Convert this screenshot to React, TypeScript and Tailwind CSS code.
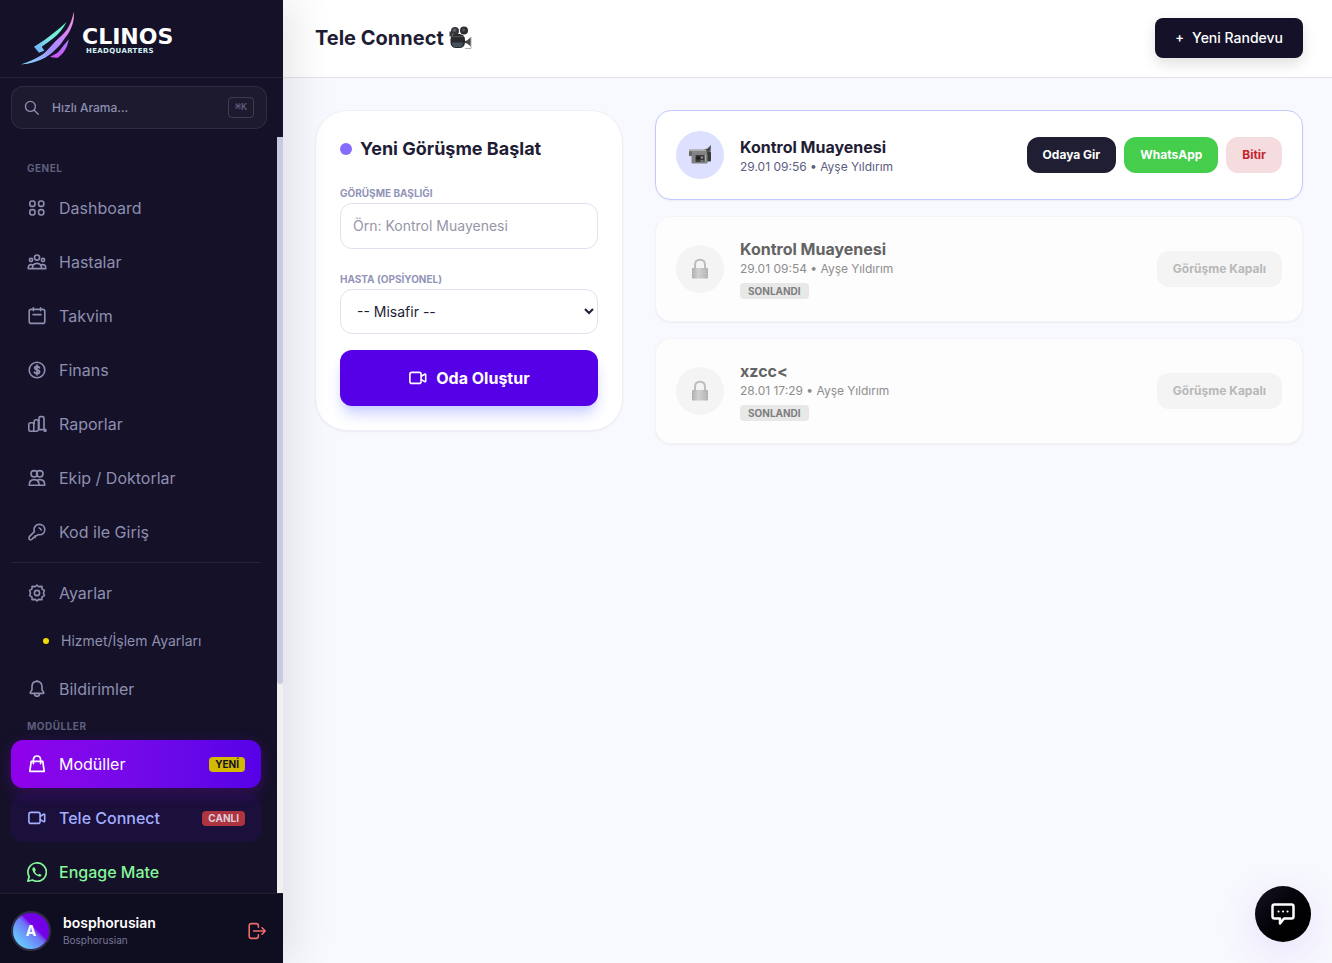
import React from "react";

const navItems = [
	{ label: "Dashboard", icon: <DashboardIcon /> },
	{ label: "Hastalar", icon: <PatientsIcon /> },
	{ label: "Takvim", icon: <CalendarIcon /> },
	{ label: "Finans", icon: <FinanceIcon /> },
	{ label: "Raporlar", icon: <ReportsIcon /> },
	{ label: "Ekip / Doktorlar", icon: <TeamIcon /> },
	{ label: "Kod ile Giriş", icon: <KeyIcon /> },
];

const calls = [
	{ title: "Kontrol Muayenesi", info: "29.01 09:56 • Ayşe Yıldırım", active: true },
	{ title: "Kontrol Muayenesi", info: "29.01 09:54 • Ayşe Yıldırım", active: false },
	{ title: "xzcc<", info: "28.01 17:29 • Ayşe Yıldırım", active: false },
];

function Icon({ children, className = "size-5" }: { children: React.ReactNode; className?: string }) {
	return (
		<svg
			viewBox="0 0 20 20"
			className={`${className} shrink-0`}
			fill="none"
			stroke="currentColor"
			strokeWidth="1.6"
			strokeLinecap="round"
			strokeLinejoin="round"
			aria-hidden="true"
		>
			{children}
		</svg>
	);
}

function DashboardIcon() {
	return (
		<Icon>
			<rect x="2.8" y="3" width="5.2" height="5.4" rx="2.2" />
			<rect x="11.6" y="3" width="5.2" height="5.4" rx="2.2" />
			<rect x="2.8" y="11.6" width="5.2" height="5.4" rx="2.2" />
			<rect x="11.6" y="11.6" width="5.2" height="5.4" rx="2.2" />
		</Icon>
	);
}

function PatientsIcon() {
	return (
		<Icon>
			<circle cx="10" cy="5.6" r="2.6" />
			<circle cx="4" cy="8" r="1.600" />
			<circle cx="16" cy="8" r="1.600" />
			<path d="M5.400 16.600c0-3.400 1.600-5.200 4.600-5.200s4.600 1.800 4.600 5.200M1.200 16.600h17.600c0-2.800-.9-4-3.200-4-.7 0-1.100.1-1.600.4M1.200 16.600c0-2.800.9-4 3.200-4 .7 0 1.100.1 1.600.4" />
		</Icon>
	);
}

function CalendarIcon() {
	return (
		<Icon>
			<rect x="2.200" y="3.400" width="15.600" height="14" rx="2" />
			<path d="M6.400 1.800v2.800M13.600 1.800v2.800M6 8.600h8" />
		</Icon>
	);
}

function FinanceIcon() {
	return (
		<Icon>
			<circle cx="10" cy="10" r="7.800" />
			<path d="M12.400 7.800c-.3-.8-1.100-1.300-2.400-1.300-1.400 0-2.300.6-2.300 1.600 0 2.600 4.800 1.100 4.800 3.800 0 1-1 1.600-2.500 1.600-1.400 0-2.300-.5-2.600-1.400M10 5.200v9.600" strokeWidth="1.800" />
		</Icon>
	);
}

function ReportsIcon() {
	return (
		<Icon>
			<rect x="1.800" y="8.800" width="5" height="8.400" rx="1.700" />
			<path d="M6.600 17.200h3.200c1 0 1.600-.6 1.600-1.600V7.400c0-1-.6-1.600-1.600-1.600H8.800c-1 0-1.600.6-1.600 1.600v2" />
			<path d="M12.400 15.600h6.400v1.600h-1.400M12 14V4.200c0-1 .6-1.600 1.600-1.600h1.800c1 0 1.600.6 1.600 1.600v11.400" />
		</Icon>
	);
}

function TeamIcon() {
	return (
		<Icon>
			<circle cx="7.200" cy="5.800" r="3.200" />
			<circle cx="12.800" cy="5.800" r="3.200" />
			<path d="M2.200 17.200c0-3.800 1.600-5.600 5-5.600s5 1.800 5 5.600zM11.400 11.800c.4-.1.9-.2 1.600-.2 3.200 0 4.800 1.800 4.800 5.600h-5.600" />
		</Icon>
	);
}

function KeyIcon() {
	return (
		<Icon>
			<path d="M12.200 2.400c3.400 0 5.600 2.200 5.600 5.200s-2.200 5.200-5.200 5.200c-1 0-1.600-.2-1.600-.2l-1.400 1.200H8.200v1.600H6.600L5 17.200c-.3.400-.8.500-1.200.5H3c-.6 0-.9-.4-.9-.9v-1.300c0-.4.200-.8.500-1.100L7.400 9.600S7 8.700 7 7.600c0-3 2.200-5.200 5.200-5.200z" />
			<path d="M12.200 5.900c1 .3 1.700 1 2 2" />
		</Icon>
	);
}

function GearIcon() {
	return (
		<Icon>
			<path d="M8.300 3.600 10 2.200l1.700 1.400 3.200-.2.200 2.700 2.300 1.300-.9 2.600.9 2.600-2.300 1.300-.2 2.700-3.200-.2L10 17.800l-1.700-1.400-3.200.2-.2-2.700-2.300-1.300.9-2.600-.9-2.600 2.300-1.300.2-2.700z" />
			<circle cx="10" cy="10" r="2.600" />
		</Icon>
	);
}

function BellIcon() {
	return (
		<Icon>
			<path d="M10 2.400c-3.200 0-5 2.200-5 5.200v3.200l-1.700 2.600c-.3.500 0 1 .6 1h12.200c.6 0 .9-.5.6-1L15 10.800V7.600c0-3-1.800-5.200-5-5.200zM7.400 14.600c.2 1.700 1.100 2.700 2.600 2.700s2.400-1 2.600-2.700M10 1.500v.9" />
		</Icon>
	);
}

function BagIcon() {
	return (
		<Icon>
			<path d="M4.200 7.400h11.600l1.400 9.900H2.800zM6.400 9.600V6c0-2.400 1.300-4 3.600-4s3.600 1.600 3.600 4v3.600" strokeWidth="1.700" />
		</Icon>
	);
}

function VideoIcon({ className }: { className?: string }) {
	return (
		<Icon className={className}>
			<rect x="1.900" y="4.400" width="11.200" height="11" rx="2" />
			<path d="m13.300 8.200 3.400-2c.5-.3 1 0 1 .6v6.200c0 .6-.5.900-1 .6l-3.400-2" />
		</Icon>
	);
}

function WhatsAppIcon() {
	return (
		<Icon>
			<path d="M.8 19.200 2.200 14.700A9.200 9.200 0 1 1 5.500 18z" strokeWidth="1.700" />
			<path d="M6.300 5.400c-.9.400-1.200 1.500-.8 2.800 1 3.200 3.300 5.400 6.400 6.200 1.300.3 2.400-.3 2.600-1.500l-2.100-1.200-1.200 1c-1.600-.6-2.700-1.800-3.300-3.300l.9-1.100-.9-2.400c-.3-.5-.9-.7-1.600-.5z" fill="currentColor" stroke="none" />
		</Icon>
	);
}

function LogoutIcon() {
	return (
		<Icon>
			<path d="M11.400 6.200V4.800c0-1.400-.8-2.200-2.200-2.200H4.400C3 2.600 2.200 3.400 2.200 4.800v10.400c0 1.400.8 2.200 2.200 2.200h4.800c1.400 0 2.200-.8 2.200-2.200v-1.400M6.600 10h11.200M15 6.800l3.200 3.200-3.200 3.200" />
		</Icon>
	);
}

function LogoMark() {
	return (
		<svg viewBox="0 0 56 56" className="size-14 shrink-0" aria-hidden="true">
			<defs>
				<linearGradient id="blade" x1="1" y1="0" x2="0" y2="1">
					<stop offset="0" stopColor="#ff9bd2" />
					<stop offset=".3" stopColor="#d583fb" />
					<stop offset=".55" stopColor="#a58bff" />
					<stop offset="1" stopColor="#7fe0ff" />
				</linearGradient>
				<linearGradient id="wing" x1="1" y1="0" x2="0" y2="1">
					<stop offset="0" stopColor="#5ff7c0" />
					<stop offset=".5" stopColor="#7cebe0" />
					<stop offset="1" stopColor="#6fa8ff" />
				</linearGradient>
				<linearGradient id="fin" x1="1" y1="0" x2="0" y2="1">
					<stop offset="0" stopColor="#a97bff" />
					<stop offset="1" stopColor="#d54ef5" />
				</linearGradient>
			</defs>
			<path d="M53.700.7c.5 5 0 9-1.400 13.300C50.500 19 48.300 23 45 27c-3 4.500-6 8.500-10 12-3 3-6.500 5.500-10 7.700C18 50.500 10 52.700.7 53.400 8.500 51 15.500 48 21.700 44c5-3.600 9-8.500 13.300-13.300 4-4 8.500-7.500 11.700-11.700C50 14 52.700 7 53.700.7z" fill="url(#blade)" />
			<path d="M46.700 10.700C43 18 38.500 23 33.300 27.300c-3.600 3-7.600 5.700-11.600 8.400l2.600 4-5.300 2-5-6c7-4 13.500-8.500 19.300-13.400 4.700-3.800 9.200-7.300 13.400-11.600z" fill="url(#wing)" />
			<path d="M48.700 28.300c-.4 3.700-1.700 7.400-3.700 10.700-1.800 3-4.200 5.700-7.300 7.700-2.700.3-5.200-.2-7.700-1 2.500-1 4.700-2 6.700-3.400 2.600-2.200 4.600-4.800 6.600-7.600 2-2 3.800-4.200 5.400-6.400z" fill="url(#fin)" />
		</svg>
	);
}

function FilmCamera() {
	return (
		<svg viewBox="0 0 24 24" className="size-6" role="img" aria-label="Kamera">
			<circle cx="7" cy="5" r="4" fill="#38383c" />
			<circle cx="16" cy="4.500" r="4" fill="#2c2c30" />
			<circle cx="6.500" cy="4.300" r="1.800" fill="#606066" />
			<circle cx="15.500" cy="4" r="1.800" fill="#505056" />
			<path d="M1.500 5.500h3v5h-3z" fill="#3a3a3f" />
			<rect x="2.500" y="8" width="14.500" height="14" rx="5.500" fill="#29292d" />
			<path d="M4 16.500h10.500v2c0 1.500-1 2.500-2.500 2.500H7c-2 0-3-2-3-4.500z" fill="#45525e" />
			<path d="M3.500 10.500h12.500" stroke="#505056" strokeWidth="1.200" />
			<path d="m17 15 2-.5 4-3.500v9.500L19 17.500l-2-.5z" fill="#46464b" />
			<path d="M23 11v11.500h-6" stroke="#b2b2b6" strokeWidth="1" fill="none" />
		</svg>
	);
}

function Camcorder() {
	return (
		<svg viewBox="0 0 24 24" className="size-6" role="img" aria-label="Görüşme açık">
			<path d="m15.500 6.500 4-1L23 2l-.5 6.500-5 .5z" fill="#4a4a4a" />
			<rect x="18.500" y="8.500" width="4.500" height="10" rx="1" fill="#3a3a3a" />
			<rect x="1" y="6.500" width="17.500" height="5" rx="1" fill="#858585" />
			<path d="M1.500 7.200H18" stroke="#c0c0c0" strokeWidth="1" />
			<rect x="1" y="8.500" width="3" height="4.500" fill="#666" />
			<rect x="3.500" y="10.500" width="16" height="10" rx="1.200" fill="#808080" />
			<rect x="7.500" y="12" width="9" height="7" rx="1" fill="#3d3d3d" />
			<circle cx="10" cy="15" r="2" fill="#222" />
			<circle cx="14" cy="14.500" r="1" fill="#aaa" />
			<path d="M12.500 18h3M17.500 12v6.500" stroke="#aaa" strokeWidth="1" />
		</svg>
	);
}

function Padlock() {
	return (
		<svg viewBox="0 0 24 24" className="size-6" role="img" aria-label="Görüşme kapalı">
			<defs>
				<linearGradient id="lock">
					<stop offset="0" stopColor="#a8a8a8" />
					<stop offset=".4" stopColor="#d2d2d2" />
					<stop offset="1" stopColor="#adadad" />
				</linearGradient>
			</defs>
			<path d="M7 12V8c0-3.300 2-5.200 5-5.200S17 4.700 17 8v4" fill="none" stroke="#bdbdbd" strokeWidth="2" />
			<rect x="4" y="11" width="16" height="10.500" rx="1" fill="url(#lock)" />
			<path d="M4.500 14h15M4.500 16.500h15M4.500 19h15" stroke="#cfcfcf" strokeWidth=".6" />
		</svg>
	);
}

function NavLink({ label, icon, className = "text-[#8e8fb0]", badge }: { label: string; icon: React.ReactNode; className?: string; badge?: React.ReactNode }) {
	return (
		<a href="#" className={`flex h-12 shrink-0 items-center gap-3 rounded-xl px-4 text-base ${className}`}>
			{icon}
			<span className="flex-1">{label}</span>
			{badge}
		</a>
	);
}

function Sidebar() {
	return (
		<aside className="relative z-10 flex w-[283px] shrink-0 flex-col bg-[#141128] shadow-[10px_0_40px_rgba(0,0,0,0.1)]">
			<div className="flex h-[78px] shrink-0 items-center gap-1.5 border-b border-white/8 pl-5">
				<LogoMark />
				<div className="flex flex-col pt-1 font-['DejaVu_Sans',sans-serif] font-bold text-white">
					<span className="text-[22px] leading-5">CLINOS</span>
					<span className="pl-1 text-[7px] leading-2 tracking-wider text-[#d5f0f2]">HEADQUARTERS</span>
				</div>
			</div>
			<div className="mt-2 mr-4 ml-[11px] flex h-[43px] shrink-0 items-center rounded-xl border border-white/8 bg-white/4 px-3">
				<Icon className="size-4 text-[#8e8fb0]">
					<circle cx="8" cy="8" r="6.200" strokeWidth="1.700" />
					<path d="m12.800 12.800 5 5" strokeWidth="1.700" />
				</Icon>
				<input
					type="search"
					aria-label="Hızlı Arama"
					placeholder="Hızlı Arama..."
					className="ml-3 min-w-0 flex-1 bg-transparent text-xs font-medium text-white outline-none placeholder:text-[#8e8fb0]"
				/>
				<kbd className="flex h-[21px] w-[26px] items-center justify-center rounded border border-white/15 font-['Liberation_Mono',monospace] text-[10px] text-[#6c6c8a]">⌘K</kbd>
			</div>
			<div className="mt-2 flex min-h-0 flex-1">
				<nav className="flex min-w-0 flex-1 flex-col gap-1.5 overflow-y-auto pt-6 pr-4 pl-[11px] [scrollbar-width:none]">
					<p className="mb-0.5 shrink-0 pl-4 text-[10px] leading-[15px] font-bold tracking-wider text-[#5f5f7e]">GENEL</p>
					{navItems.map((item) => (
						<NavLink key={item.label} label={item.label} icon={item.icon} />
					))}
					<hr className="shrink-0 border-white/8" />
					<NavLink label="Ayarlar" icon={<GearIcon />} />
					<a href="#" className="flex h-9 shrink-0 items-center gap-3 pl-8 text-sm text-[#8e8fb0]">
						<span className="size-1.5 rounded-full bg-[#f0dc00]" />
						Hizmet/İşlem Ayarları
					</a>
					<NavLink label="Bildirimler" icon={<BellIcon />} />
					<p className="shrink-0 pl-4 text-[10px] leading-[15px] font-bold tracking-wider text-[#5f5f7e]">MODÜLLER</p>
					<NavLink
						label="Modüller"
						icon={<BagIcon />}
						className="relative bg-linear-to-r from-[#9000ea] to-[#5600e8] text-white shadow-[0_4px_15px_rgba(144,0,234,0.3)]"
						badge={<span className="rounded bg-[#d3b900] px-1.5 text-[10px] leading-[15px] font-bold text-[#141128]">YENİ</span>}
					/>
					<NavLink
						label="Tele Connect"
						icon={<VideoIcon />}
						className="bg-[#5600e8]/10 font-medium text-[#a3aeff]"
						badge={<span className="rounded bg-[#ae343f] px-1.5 text-[10px] leading-[15px] font-bold text-[#dfcddb]">CANLI</span>}
					/>
					<NavLink label="Engage Mate" icon={<WhatsAppIcon />} className="font-medium text-[#86f79a]" />
				</nav>
				<div className="w-1.5 bg-[#f0f0f0]">
					<div className="h-[72.4%] rounded-b-full bg-[#c8cae0]" />
				</div>
			</div>
			<div className="flex h-[70px] shrink-0 items-center gap-3 border-t border-white/8 bg-[#0f0d20] pt-1 pr-4 pl-[11px]">
				<div className="flex size-10 items-center justify-center rounded-full border-2 border-[#302e45] bg-linear-to-tr from-[#63d6ff] from-10% via-[#6c78f5] via-50% to-[#7400e8] to-60% text-sm font-bold text-white">A</div>
				<div className="flex-1">
					<p className="text-sm leading-5 font-semibold text-white">bosphorusian</p>
					<p className="text-[10px] leading-[15px] text-[#77789a]">Bosphorusian</p>
				</div>
				<button type="button" aria-label="Çıkış" className="text-[#ee6b6b]">
					<LogoutIcon />
				</button>
			</div>
		</aside>
	);
}

function NewCallForm() {
	return (
		<form className="flex flex-col rounded-[32px] border border-[#eff0f6] bg-white p-6 shadow-[0_1px_2px_rgba(0,0,0,0.05)]">
			<h2 className="mb-6 flex items-center gap-2 text-lg leading-7 font-bold text-[#1f1d35]">
				<span className="size-3 rounded-full bg-[#866cfa]" />
				Yeni Görüşme Başlat
			</h2>
			<label htmlFor="title" className="mb-1 text-[10px] leading-3 font-bold text-[#9294b8]">GÖRÜŞME BAŞLIĞI</label>
			<input
				id="title"
				type="text"
				placeholder="Örn: Kontrol Muayenesi"
				className="mb-6 h-[46px] w-full rounded-xl border border-[#e1e0ef] px-3 pb-0.5 text-sm text-[#1f1d35] placeholder:text-[#9696a8]"
			/>
			<label htmlFor="patient" className="mb-1 text-[10px] leading-3 font-bold text-[#9294b8]">HASTA (OPSİYONEL)</label>
			<select id="patient" className="mb-4 h-[45px] w-full rounded-xl border border-[#e1e0ef] bg-white px-3 text-sm text-[#1f1d35]">
				<option>-- Misafir --</option>
			</select>
			<button
				type="button"
				className="flex h-14 items-center justify-center gap-2 rounded-xl bg-[#5600e8] font-bold text-white shadow-[0_10px_15px_-3px_#c7cdff,0_4px_6px_-4px_#c7cdff]"
			>
				<VideoIcon />
				Oda Oluştur
			</button>
		</form>
	);
}

function CallRow({ call }: { call: (typeof calls)[number] }) {
	const button = "h-9 rounded-xl px-4 text-xs font-bold";
	return (
		<li
			className={`flex items-center gap-4 rounded-2xl border p-5 shadow-[0_1px_2px_rgba(0,0,0,0.05)] ${
				call.active ? "border-[#c3caff] bg-white" : "border-[#f4f4f6] bg-[#fdfdfd]"
			}`}
		>
			<div className={`flex size-12 shrink-0 items-center justify-center rounded-full ${call.active ? "bg-[#dde1ff]" : "bg-[#f4f4f4]"}`}>
				{call.active ? <Camcorder /> : <Padlock />}
			</div>
			<div className="flex-1">
				<h3 className={`text-base leading-6 font-bold ${call.active ? "text-[#1f1d35]" : "text-[#636363]"}`}>{call.title}</h3>
				<p className={`text-xs leading-4 ${call.active ? "text-[#5c5d80]" : "text-[#8d8d8d]"}`}>{call.info}</p>
				{!call.active && (
					<span className="mt-1.5 mb-0.5 block w-fit rounded bg-[#e8e8e8] px-2 text-[10px] leading-4 font-bold text-[#7e7e7e]">SONLANDI</span>
				)}
			</div>
			{call.active ? (
				<div className="flex gap-2">
					<button type="button" className={`${button} bg-[#1f1e33] text-white`}>Odaya Gir</button>
					<button type="button" className={`${button} bg-[#45cd4c] text-white`}>WhatsApp</button>
					<button type="button" className={`${button} bg-[#f5dddf] text-[#c4262e]`}>Bitir</button>
				</div>
			) : (
				<button type="button" disabled className={`${button} bg-[#f4f4f4] text-[#b8b8b8]`}>Görüşme Kapalı</button>
			)}
		</li>
	);
}

export default function App() {
	return (
		<div className="flex h-screen overflow-hidden bg-[#f8f9fe] font-[Inter,sans-serif]">
			<Sidebar />
			<div className="flex min-w-0 flex-1 flex-col">
				<header className="flex h-[78px] shrink-0 items-center justify-between border-b border-[#e1e2e8] bg-white pr-[29px] pb-0.5 pl-8">
					<h1 className="flex items-center gap-1 text-xl font-bold text-[#1f1d35]">
						Tele Connect
						<FilmCamera />
					</h1>
					<button type="button" className="flex h-10 items-center gap-2 rounded-lg bg-[#141128] px-5 text-sm font-medium text-white shadow-[0_6px_14px_rgba(0,0,0,0.12)]">
						<span className="text-[13px] font-semibold">+</span>
						Yeni Randevu
					</button>
				</header>
				<main className="grid flex-1 grid-cols-3 items-start gap-8 overflow-y-auto pt-8 pr-[29px] pb-8 pl-8">
					<NewCallForm />
					<ul className="col-span-2 flex flex-col gap-4">
						{calls.map((call) => (
							<CallRow key={call.info} call={call} />
						))}
					</ul>
				</main>
			</div>
			<button
				type="button"
				aria-label="Sohbet"
				className="fixed right-[21px] bottom-[21px] z-20 flex size-14 items-center justify-center rounded-full bg-linear-to-br from-[#171525] to-black text-white shadow-[0_10px_40px_rgba(120,60,232,0.14)]"
			>
				<svg viewBox="0 0 24 24" className="size-6" fill="none" stroke="currentColor" strokeWidth="2.500" strokeLinejoin="round" aria-hidden="true">
					<path d="M3.500 2.500h17c1.200 0 2 .8 2 2v10c0 1.200-.8 2-2 2H13L9 21.500v-5H3.500c-1.200 0-2-.8-2-2v-10c0-1.200.8-2 2-2z" />
					<path d="M7.500 9.500h.1M12 9.500h.1M16.500 9.500h.1" strokeLinecap="round" strokeWidth="2" />
				</svg>
			</button>
		</div>
	);
}
